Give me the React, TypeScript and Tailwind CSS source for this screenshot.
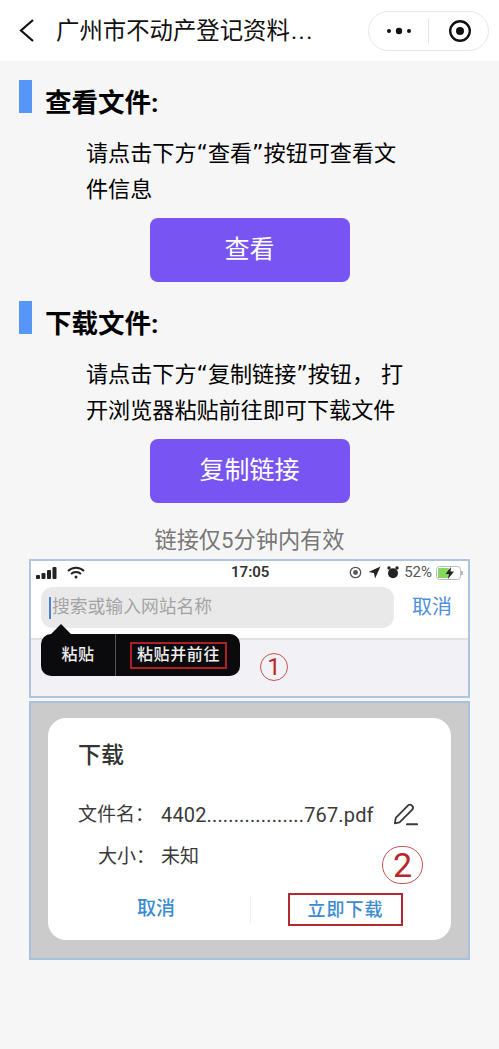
import React from 'react';

const cjk = "font-['Roboto','Noto_Sans_CJK_SC',sans-serif]";
const bodyFont = "font-['DejaVu_Sans','Noto_Sans_CJK_SC',sans-serif]";

function SectionTitle({ text }: { text: string }) {
  return (
    <div className="flex items-start pl-[19px]">
      <div className="h-[33px] w-[13px] bg-[#5596f6]" />
      <h2 className="ml-[13px] mt-[5px] text-[26.500px] leading-[36px] font-bold text-black">{text}</h2>
    </div>
  );
}

function ActionButton({ text }: { text: string }) {
  return (
    <button className="mx-auto flex h-[64px] w-[200px] items-center justify-center rounded-[8px] bg-[#7855f3] text-[25px] text-white">
      {text}
    </button>
  );
}

function StatusBar() {
  return (
    <div className="flex h-[23px] items-center bg-white pl-[5px] pr-[4px]">
      <div className="flex w-[195px] items-center gap-[10px]">
        <svg width="21" height="12" viewBox="0 0 21 12" fill="#222">
          <rect x="0" y="8" width="4" height="4" rx="1" />
          <rect x="5.500" y="6" width="4" height="6" rx="1" />
          <rect x="11" y="3" width="4" height="9" rx="1" />
          <rect x="16.500" y="0" width="4" height="12" rx="1" />
        </svg>
        <svg width="18" height="13" viewBox="0 0 18 13" fill="none" stroke="#222" strokeWidth="2">
          <path d="M1 5a11.500 11.500 0 0 1 16 0" />
          <path d="M4 8a7 7 0 0 1 10 0" />
          <circle cx="9" cy="11" r="1.500" fill="#222" stroke="none" />
        </svg>
      </div>
      <span className="w-[37px] text-[15px] leading-none font-semibold text-[#333]">17:05</span>
      <div className="ml-auto flex items-center gap-[6px]">
        <svg width="13" height="13" viewBox="0 0 13 13" fill="none">
          <circle cx="6.500" cy="6.500" r="5.200" stroke="#555" strokeWidth="1.300" />
          <circle cx="6.500" cy="6.500" r="2.400" fill="#555" />
        </svg>
        <svg width="13" height="13" viewBox="0 0 12 12" fill="#222">
          <path d="M11.500.5 6.500 11.500 5.500 6.500.5 5.500z" />
        </svg>
        <svg width="12" height="13" viewBox="0 0 12 13" fill="#222">
          <circle cx="6" cy="7.200" r="5" />
          <circle cx="2" cy="2" r="1.700" />
          <circle cx="10" cy="2" r="1.700" />
        </svg>
        <span className="-ml-[1px] text-[15px] leading-none text-[#555]">52%</span>
        <svg className="-ml-[2px]" width="28" height="14" viewBox="0 0 28 14" fill="none">
          <rect x="0.500" y="0.500" width="24" height="13" rx="3" stroke="#bbb" />
          <rect x="2" y="2" width="11" height="10" rx="1" fill="#86d95f" />
          <path d="M26 5v4" stroke="#bbb" strokeWidth="2" />
          <path d="M15 1 9.500 8H13l-1 5 6-7.500h-3.500z" fill="#222" />
        </svg>
      </div>
    </div>
  );
}

function BrowserShot() {
  return (
    <div className="relative mx-[29px] h-[139px] border-2 border-[#aec5df] bg-[#f1f1f6]">
      <StatusBar />
      <div className="flex h-[56px] items-start border-b-2 border-[#e1e1e4] bg-white pl-[10px] pt-[3px]">
        <div className="flex h-[41px] w-[353px] items-center rounded-[12px] bg-[#e9e9e9] pl-[8px] text-[17.800px] text-[#a3a3a6]">
          <span className="mr-[1px] h-[22px] w-[2px] bg-[#4a80d8]" />
          搜索或输入网站名称
        </div>
        <span className="ml-[18px] mt-[8px] text-[20px] leading-[24px] text-[#4d8fdc]">取消</span>
      </div>
      <div className="absolute left-[10px] top-[73px] flex h-[42px] w-[199px] items-center rounded-[10px] bg-[#0b0b0d] text-[16px] font-medium text-[#eee]">
        <span className="absolute -top-[7px] left-[13px] h-[14px] w-[14px] rotate-45 bg-[#0b0b0d]" />
        <span className="w-[74px] text-center tracking-[0.5px]">粘贴</span>
        <span className="h-full w-px bg-[#555]" />
        <span className="ml-[14px] flex h-[27px] w-[97px] items-center justify-center border-2 border-[#b01e26] tracking-[0.6px]">粘贴并前往</span>
      </div>
      <div className="absolute left-[229px] top-[92px] flex h-[28px] w-[28px] items-center justify-center rounded-full border border-[#c5524f] text-[24px] leading-none text-[#b9262b]">
        1
      </div>
    </div>
  );
}

function DownloadShot() {
  return (
    <div className="mx-[29px] mt-[3px] h-[259px] border-2 border-[#a9c0dc] bg-[#cbcbcb] px-[17px] pt-[15px]">
      <div className="relative h-[222px] rounded-[18px] bg-white pl-[30px] pt-[23px] text-[#3a3a3a]">
        <div className="text-[23px] leading-[30px] font-medium text-[#333]">下载</div>
        <div className="mt-[31px] flex items-center text-[19px] leading-[24px]">
          <span className="w-[83px]">文件名：</span>
          <span className="w-[211px] whitespace-nowrap text-[20px] tracking-[0.15px]">4402..................767.pdf</span>
          <svg className="ml-[21px]" width="26" height="26" viewBox="0 0 28 26" fill="none" stroke="#3a3a3a" strokeWidth="2" strokeLinejoin="round">
            <path d="M2 22 3 16 16 3c1.500-1.500 3-1.500 4.500 0s1.500 3 0 4.500L7 21z" />
            <path d="M15 23h11" strokeLinecap="round" />
          </svg>
        </div>
        <div className="mt-[17px] flex text-[19px] leading-[24px]">
          <span className="w-[83px] pl-[20px]">大小：</span>
          <span>未知</span>
        </div>
        <div className="absolute bottom-[14px] left-0 right-0 flex h-[33px] items-center">
          <span className="ml-[89px] text-[19px] font-medium text-[#3c8bd0]">取消</span>
          <span className="ml-[75px] h-[28px] w-px bg-[#eee]" />
          <span className="ml-[37px] flex h-[33px] w-[115px] items-center justify-center border-2 border-[#b22a30] text-[18px] font-medium tracking-[1px] text-[#3c8bd0]">立即下载</span>
        </div>
        <div className="absolute left-[334px] top-[128px] flex h-[38px] w-[41px] items-center justify-center rounded-full border border-[#c5524f] text-[34px] leading-none text-[#b9262b]">
          2
        </div>
      </div>
    </div>
  );
}

export default function App() {
  return (
    <div className={`${cjk} h-[1049px] w-[499px] overflow-hidden bg-[#f6f6f6]`}>
      <header className="flex h-[61px] items-center bg-white">
        <svg className="ml-[18px]" width="18" height="25" viewBox="0 0 18 25" fill="none" stroke="#111" strokeWidth="2.200">
          <path d="M15 2 3 12.500 15 23" />
        </svg>
        <h1 className="ml-[20px] text-[23.400px] leading-[30px] whitespace-nowrap text-[#111]">
          广州市不动产登记资料<span className="ml-[1px] tracking-[1.500px]">...</span>
        </h1>
        <div className="ml-auto mr-[10px] flex h-[40px] w-[121px] items-center rounded-full border border-[#e8e8e8] bg-white">
          <svg className="ml-[17px]" width="26" height="10" viewBox="0 0 26 10" fill="#111">
            <circle cx="3" cy="5" r="2" />
            <circle cx="13" cy="5" r="3.200" />
            <circle cx="23" cy="5" r="2" />
          </svg>
          <span className="ml-[16px] h-[24px] w-px bg-[#e3e3e3]" />
          <svg className="ml-[19px]" width="24" height="24" viewBox="0 0 24 24" fill="none">
            <circle cx="12" cy="12" r="9.800" stroke="#111" strokeWidth="2.400" />
            <circle cx="12" cy="12" r="4" fill="#111" />
          </svg>
        </div>
      </header>

      <div className="pt-[19px]">
        <SectionTitle text="查看文件:" />
        <p className={`${bodyFont} ml-[86px] mt-[14px] w-[315px] text-[22.100px] leading-[36px] text-black`}>
          请点击下方“查看”按钮可查看文件信息
        </p>
        <div className="mt-[11px]">
          <ActionButton text="查看" />
        </div>
      </div>

      <div className="pt-[19px]">
        <SectionTitle text="下载文件:" />
        <p className={`${bodyFont} ml-[86px] mt-[14px] w-[320px] text-[22.100px] leading-[36px] text-black`}>
          请点击下方“复制链接”按钮， 打开浏览器粘贴前往即可下载文件
        </p>
        <div className="mt-[11px]">
          <ActionButton text="复制链接" />
        </div>
      </div>

      <p className="mt-[19px] text-center text-[22.200px] leading-[36px] text-[#777]">链接仅5分钟内有效</p>
      <div className="mt-[1px]">
        <BrowserShot />
        <DownloadShot />
      </div>
    </div>
  );
}
